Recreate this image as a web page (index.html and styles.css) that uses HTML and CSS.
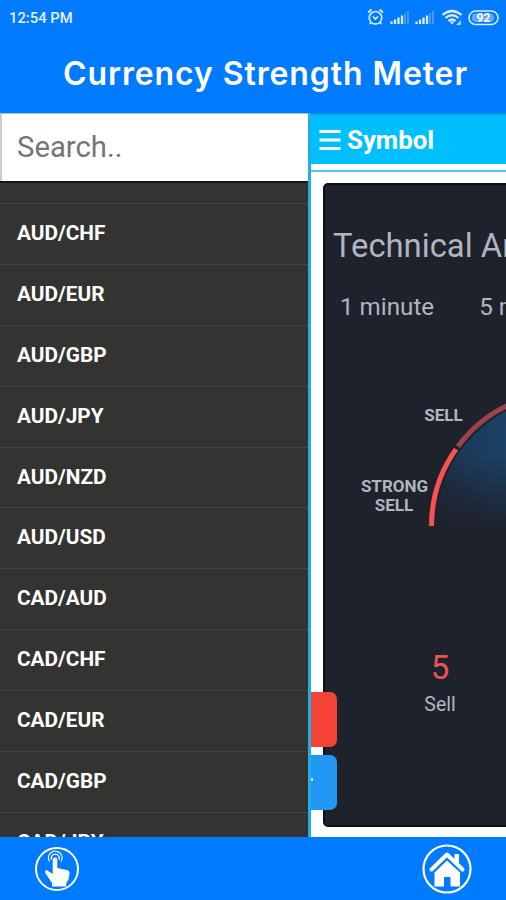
FILE: index.html
```html
<!DOCTYPE html>
<html lang="en">
<head>
  <meta charset="UTF-8">
  <meta name="viewport" content="width=device-width, initial-scale=1.0">
  <title>Currency Strength Meter</title>
  <link rel="stylesheet" href="styles.css">
</head>
<body>

<header class="header">
  <div class="status">
    <span class="clock">12:54 PM</span>
    <svg class="status-icons" width="134" height="20" viewBox="0 0 134 20" fill="none" stroke="#d9ecff">
      <circle cx="9.500" cy="10.800" r="6.300" stroke-width="1.700"/>
      <path d="M7 9.500l2.500 2.500L12 9.500M2 5.500l3.500-3M17 5.500l-3.500-3M5 15.500l-1.500 1.500M14 15.500l1.500 1.500" stroke-width="1.700"/>
      <path d="M25.500 17v-2.500M29 17v-4.500M32.500 17V10.500M36 17V8.500M50.500 17v-2.500M54 17v-4.500M57.500 17V10.500M61 17V8.500" stroke-width="2.300"/>
      <path d="M39 17V6M42 17V4M64 17V6M67 17V4" stroke-width="1.800" opacity=".35"/>
      <path d="M76.500 8Q86 0 95.500 8M79.500 11Q86 5.500 92.500 11M82.300 14Q86 11 89.700 14" stroke-width="2.200"/>
      <path d="M83.500 14.500h5L86 17.500z" fill="#d9ecff" stroke="none"/>
      <path d="M95 13v5h-5z" fill="#a9d3ff" stroke="none"/>
      <rect x="103" y="4" width="29" height="13.500" rx="6.700" stroke-width="1.600"/>
      <rect x="106" y="6.500" width="22" height="8.500" rx="4" fill="#5fa8ff" stroke="none"/>
      <text class="battery" x="117.500" y="15" text-anchor="middle">92</text>
    </svg>
  </div>
  <h1 class="title">Currency Strength Meter</h1>
</header>

<div class="content">
  <nav class="sidebar">
    <input class="search" type="text" placeholder="Search..">
    <ul class="pairs">
      <li></li>
      <li>AUD/CHF</li>
      <li>AUD/EUR</li>
      <li>AUD/GBP</li>
      <li>AUD/JPY</li>
      <li>AUD/NZD</li>
      <li>AUD/USD</li>
      <li>CAD/AUD</li>
      <li>CAD/CHF</li>
      <li>CAD/EUR</li>
      <li>CAD/GBP</li>
      <li>CAD/JPY</li>
    </ul>
  </nav>

  <main class="main">
    <div class="symbol-bar">
      <svg width="22" height="22" viewBox="0 0 22 22" stroke="#fff" stroke-width="3"><path d="M.5 2.500h21M.5 11h21M.5 19.500h21"/></svg>
      <span>Symbol</span>
    </div>
    <div class="card">
      <h2 class="card-title">Technical Analysis</h2>
      <div class="tabs">
        <span>1 minute</span>
        <span>5 minutes</span>
      </div>
      <svg class="gauge" width="360" height="160" viewBox="0 0 360 160">
        <defs>
          <radialGradient id="glow" gradientUnits="userSpaceOnUse" cx="242" cy="60" r="165">
            <stop offset="0" stop-color="#1c4b78"/>
            <stop offset=".6" stop-color="#1b3b5b"/>
            <stop offset="1" stop-color="#1e222d"/>
          </radialGradient>
          <linearGradient id="fade" x1="0" y1="0" x2="0" y2="1">
            <stop offset=".45" stop-color="#1e222d" stop-opacity="0"/>
            <stop offset="1" stop-color="#1e222d"/>
          </linearGradient>
        </defs>
        <path d="M113 146a129 129 0 0 1 258 0z" fill="url(#glow)"/>
        <path d="M112 147a130 130 0 0 1 260 0z" fill="url(#fade)"/>
        <path d="M108.500 146A133.500 133.500 0 0 1 133 69.100" fill="none" stroke="#f7524f" stroke-width="5"/>
        <path d="M135 66.400A133.500 133.500 0 0 1 200.700 19" fill="none" stroke="#9c444b" stroke-width="5"/>
        <g class="gauge-label" text-anchor="middle">
          <text x="120.500" y="40.500">SELL</text>
          <text x="71.500" y="112">STRONG</text>
          <text x="71" y="131">SELL</text>
        </g>
      </svg>
      <div class="count">
        <span class="count-value">5</span>
        <span class="count-label">Sell</span>
      </div>
    </div>
    <div class="side-buttons">
      <div class="btn btn-sell"></div>
      <div class="btn btn-buy"><i></i></div>
    </div>
  </main>
</div>

<footer class="footer">
  <svg class="tap" width="46" height="46" viewBox="0 0 46 46" fill="none" stroke="#fff">
    <circle cx="23" cy="23" r="21" stroke-width="2"/>
    <path d="M15.500 15.500a6.800 6.800 0 1 1 11.500 0" stroke-width="1.300"/>
    <path d="M17.500 13.500a4 4 0 1 1 7.500 0" stroke-width="1.300"/>
    <path d="M18.700 13.500q0-2 2.300-2t2.300 2v8.500l9.500 2q3 .7 2.700 4l-1.200 6-2 3v3.500H18V37l-7-10.500q-.5-2.500 2-2.200l5.700 3.700z" fill="#fff" stroke="none"/>
  </svg>
  <svg width="50" height="50" viewBox="0 0 50 50">
    <circle cx="25" cy="25" r="23.500" fill="none" stroke="#fff" stroke-width="2.200"/>
    <path d="M9.500 25.500L25 10.500l15.500 15" fill="none" stroke="#fff" stroke-width="4" stroke-linecap="round" stroke-linejoin="round"/>
    <path d="M32.500 10h4.500v11l-4.500-4.500zM25 16.500L38 28.500V42.500H28.500V33h-6.500v9.500H12.500V28.500z" fill="#fff"/>
  </svg>
</footer>

</body>
</html>
```
FILE: styles.css
```css
* {
  box-sizing: border-box;
}
body {
  margin: 0;
  height: 900px;
  display: flex;
  flex-direction: column;
  overflow: hidden;
  font-family: Roboto, sans-serif;
  background: #fff;
}
.header {
  height: 113px;
  background: #007aff;
  color: #fff;
}
.status {
  display: flex;
  justify-content: space-between;
  align-items: center;
  height: 36px;
  padding: 0 6px 2px 9px;
}
.clock {
  font-size: 14.800px;
  font-weight: 500;
  line-height: 20px;
  padding-top: 2px;
  color: #e4f2ff;
}
.battery {
  font-size: 12px;
  font-weight: 700;
  fill: #fff;
  stroke: none;
}
.title {
  margin: 18px 0 0 63px;
  font-family: Inter, sans-serif;
  font-size: 32px;
  font-weight: 600;
  line-height: 40px;
  letter-spacing: 0.900px;
  white-space: nowrap;
}
.content {
  display: flex;
  height: 724px;
  overflow: hidden;
}
.sidebar {
  width: 308px;
  flex: none;
  background: #333331;
}
.search {
  display: block;
  width: 100%;
  height: 68px;
  padding: 0 15px 2px;
  border: 0;
  border-left: 2px solid #ccc;
  border-top: 1px solid #bbb;
  border-radius: 0;
  font-family: Roboto, sans-serif;
  font-size: 29.300px;
  background: #fff;
}
.search::placeholder {
  color: #757575;
}
.pairs {
  list-style: none;
  margin: 0;
  padding: 0;
  border-top: 2px solid #141413;
}
.pairs li {
  height: 60.900px;
  padding: 0 17px;
  border-bottom: 1px solid #454543;
  color: #fff;
  font-size: 20.800px;
  font-weight: 700;
  line-height: 59px;
}
.pairs li:first-child {
  height: 21px;
}
.main {
  position: relative;
  flex: 1;
  min-width: 0;
  border-left: 3px solid #1eaee8;
  overflow: hidden;
  background: #fff;
}
.symbol-bar {
  display: flex;
  align-items: center;
  gap: 6px;
  height: 51px;
  margin-left: -1px;
  padding: 2px 0 0 9px;
  background: #00bfff;
  color: #fff;
  font-size: 25.800px;
  font-weight: 700;
  box-shadow: inset 0 3px 3px -2px rgba(0, 70, 140, 0.5);
}
.symbol-bar::after {
  content: "";
  position: absolute;
  left: 0;
  right: 0;
  top: 57px;
  height: 2px;
  background: #5cc5e2;
}
.card {
  width: 360px;
  height: 644px;
  margin: 19px 0 0 12px;
  border-radius: 5px;
  border: 2px solid #0d1017;
  background: #1e222d;
  color: #b2b5be;
  white-space: nowrap;
}
.card-title {
  margin: 40px 0 0 8px;
  font-size: 32.800px;
  font-weight: 400;
  line-height: 42px;
}
.tabs {
  display: flex;
  gap: 45px;
  margin: 25px 0 0 15px;
  font-size: 24.200px;
  line-height: 30px;
}
.gauge {
  display: block;
  margin: 58px 0 0 -2px;
}
.gauge-label {
  fill: #b2b5be;
  font-size: 17px;
  font-weight: 700;
}
.count {
  display: flex;
  flex-direction: column;
  align-items: center;
  width: 60px;
  margin: 108px 0 0 85px;
}
.count-value {
  color: #ef5350;
  font-size: 33px;
  line-height: 40px;
}
.count-label {
  margin-top: 4px;
  font-size: 19.500px;
  line-height: 26px;
}
.side-buttons {
  position: absolute;
  left: 0;
  top: 579px;
  display: flex;
  flex-direction: column;
  gap: 8px;
}
.btn {
  width: 26px;
  height: 55px;
  border-radius: 0 7px 7px 0;
}
.btn-sell {
  background: #f44336;
}
.btn-buy {
  padding-top: 23px;
  background: #2196f3;
}
.btn-buy i {
  display: block;
  width: 2px;
  height: 3px;
  background: #d8ecff;
}
.footer {
  display: flex;
  justify-content: space-between;
  height: 63px;
  padding: 7px 34px 0;
  background: #007aff;
}
.tap {
  margin-top: 2px;
}
```
